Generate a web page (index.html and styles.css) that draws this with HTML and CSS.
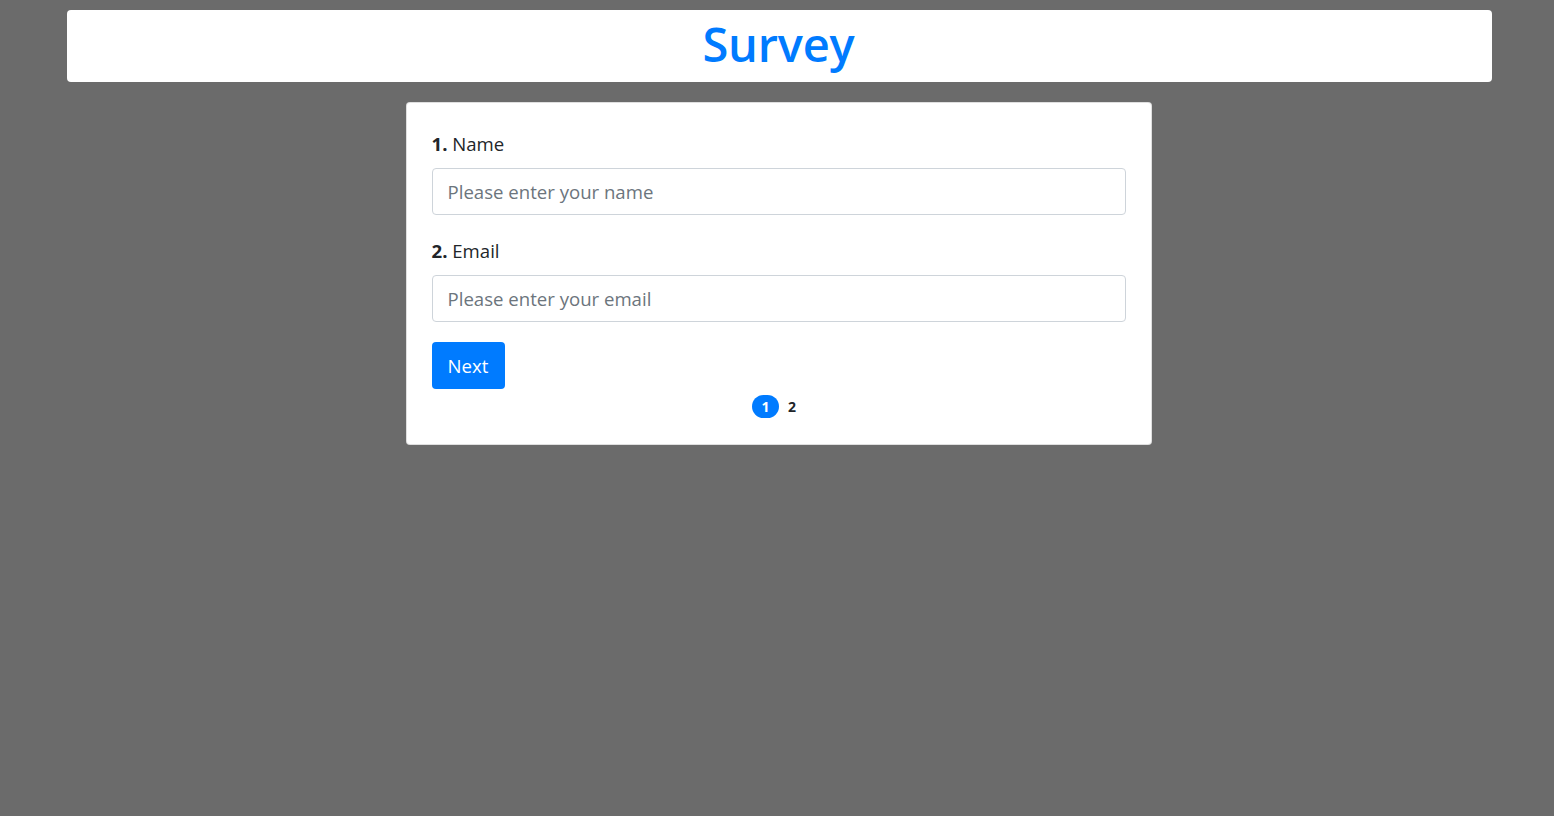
FILE: index.html
```html
<!DOCTYPE html>
<html>
<head>
<meta charset="utf-8">
<link rel="stylesheet" href="styles.css">
</head>
<body>
<div class="page">
  <header class="title-card">
    <h1 class="title">Survey</h1>
  </header>
  <main class="survey-card">
    <div class="question">
      <label class="q-label"><b>1.</b> Name</label>
      <input class="q-input" type="text" placeholder="Please enter your name">
    </div>
    <div class="question">
      <label class="q-label"><b>2.</b> Email</label>
      <input class="q-input" type="text" placeholder="Please enter your email">
    </div>
    <button class="btn-next">Next</button>
    <nav class="pager">
      <span class="page-dot active">1</span>
      <span class="page-dot">2</span>
    </nav>
  </main>
</div>
</body>
</html>
```
FILE: styles.css
```css
html, body {
  margin: 0;
  padding: 0;
  background: #6b6b6b;
  font-family: "Open Sans", "Noto Sans", sans-serif;
  color: #212529;
}
.page {
  padding: 10px 62px 0 67px;
  display: flex;
  flex-direction: column;
  align-items: center;
  gap: 20px;
}
.title-card {
  align-self: stretch;
  height: 72px;
  box-sizing: border-box;
  background: #fff;
  border-radius: 4px;
  display: flex;
  justify-content: center;
  align-items: center;
}
.title {
  margin: 0;
  font-size: 47px;
  font-weight: 600;
  color: #007bff;
  line-height: 1;
  position: relative;
  top: -2px;
  left: -1px;
  letter-spacing: -0.2px;
}
.survey-card {
  width: 746px;
  margin-right: 2px;
  box-sizing: border-box;
  background: #fff;
  border: 1px solid rgba(0,0,0,.125);
  border-radius: 4px;
  padding: 25px 25px 26px;
  display: flex;
  flex-direction: column;
  align-items: flex-start;
}
.question {
  align-self: stretch;
  display: flex;
  flex-direction: column;
  margin-bottom: 20px;
}
.q-label {
  font-size: 18.6px;
  line-height: 30px;
  padding-top: 1px;
  margin-bottom: 9px;
}
.q-label b { font-weight: 700; }
.q-input {
  height: 47px;
  box-sizing: border-box;
  border: 1px solid #ced4da;
  border-radius: 4px;
  padding: 0 15px;
  font-family: inherit;
  font-size: 18.6px;
  color: #495057;
  outline: none;
}
.q-input::placeholder { color: #6c757d; }
.btn-next {
  height: 47px;
  width: 73px;
  border: none;
  border-radius: 4px;
  background: #007bff;
  color: #fff;
  font-family: inherit;
  font-size: 18.6px;
  padding: 0;
}
.pager {
  align-self: stretch;
  display: flex;
  justify-content: center;
  align-items: center;
  gap: 5px;
  margin-top: 6px;
  height: 23px;
  padding-right: 5px;
}
.page-dot {
  font-size: 14px;
  font-weight: 700;
  line-height: 23px;
  color: #212529;
  padding: 0 4px;
}
.page-dot.active {
  background: #007bff;
  color: #fff;
  border-radius: 12px;
  width: 27px;
  box-sizing: border-box;
  text-align: center;
}
```
